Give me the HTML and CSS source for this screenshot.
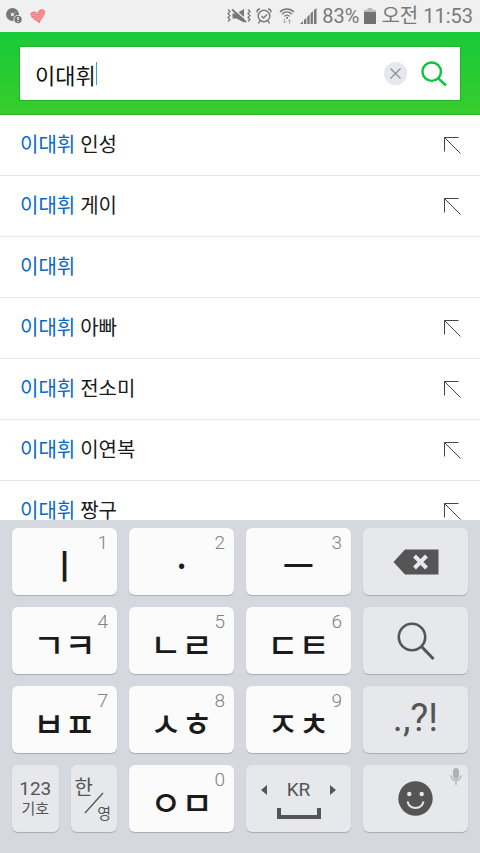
FILE: index.html
```html
<!DOCTYPE html>
<html lang="ko">
<head>
<meta charset="utf-8">
<meta name="viewport" content="width=device-width, initial-scale=1">
<title>이대휘</title>
<link rel="stylesheet" href="styles.css">
</head>
<body>
<div class="status">
  <div class="status-group">
    <svg class="icon" width="16" height="16" viewBox="0 0 16 16"><circle cx="6.500" cy="6.500" r="6.500" fill="#777"/><circle cx="6.500" cy="6.500" r="1.700" fill="#f0f0f0"/><path d="M6.500 6.500l4-3" stroke="#aaa" fill="none"/><circle cx="12" cy="11.500" r="4.600" fill="#f0f0f0"/><circle cx="12" cy="11.500" r="3.700" fill="#777"/><path d="M12 9v3M12 13v1" stroke="#f0f0f0" stroke-width="1.400"/></svg>
    <svg class="icon heart" width="16" height="15" viewBox="0 0 16 15"><path d="M9.500 14.500C6 11 0 9 .5 5 1 2 5 1.500 7.500 4 8.500 0 14-1 15 2.500c1 4-4 7-5.500 12z" fill="#ee777b"/><path d="M2 4.500l4 .5 8-3M1 6.500l6 .5 8-3M3 9l5 0 6-3M6 11.500l6-2" stroke="#f7b5b6" stroke-width=".8" fill="none"/></svg>
  </div>
  <div class="status-group status-end">
    <svg class="icon" width="24" height="16" viewBox="0 0 24 16"><path d="M5.500 5.500h4L17 1v13.500l-7.500-4h-4z" fill="#777"/><path d="M6 .5l14 12" stroke="#f0f0f0" stroke-width="1.600"/><path d="M5 1.500l14 12.500" stroke="#777" stroke-width="1.800"/><path d="M1 1.500l2 2-2 2 2 2-2 2 2 2-2 2M21 1.500l2 2-2 2 2 2-2 2 2 2-2 2" fill="none" stroke="#777" stroke-width="1.200"/></svg>
    <svg class="icon" width="16" height="16" viewBox="0 0 16 16" fill="none" stroke="#777" stroke-width="1.400"><circle cx="8" cy="8" r="5.800"/><path d="M5.500 8l2 2L11 6.500M1 4.500C1 2.500 2 1 4 1M15 4.500C15 2.500 14 1 12 1M4 12.500L2.500 15.500M12 12.500l1.500 3"/></svg>
    <svg class="icon wifi" width="16" height="16" viewBox="0 0 16 16" fill="none" stroke="#777" stroke-width="1.400"><path d="M1 4c4-4 10-4 14 0M3 6.200c3-3 7-3 10 0M5.200 8.400c1.500-1.700 4.100-1.700 5.600 0"/><circle cx="8" cy="9.800" r="1.100" fill="#777" stroke="none"/><path d="M5.500 11v4M4 13.500L5.500 15 7 13.500M10.500 16v-4M9 13.200l1.500-1.500L12 13.200" stroke="#aaa" stroke-width="1"/></svg>
    <svg class="icon" width="17" height="16" viewBox="0 0 17 16" fill="#777"><path d="M0 16l3-3v3zM4 12l2.300-2.300V16H4zM7.300 8.700L9.600 6.400V16H7.300zM10.600 5.400l2.300-2.300V16h-2.300zM14 2l2.500-2V16H14z"/></svg>
    <span>83%</span>
    <svg class="icon" width="12" height="16" viewBox="0 0 12 16"><path d="M3.500 0h5v2H12v3H0V2h3.500z" fill="#bbb"/><path d="M0 4h12v12H0z" fill="#717171"/></svg>
    <span>오전 11:53</span>
  </div>
</div>

<header class="header">
  <form class="search">
    <input class="search-input" type="text" value="이대휘" aria-label="검색어">
    <span class="caret"></span>
    <button class="plain clear" type="button" aria-label="지우기"><svg width="23" height="23" viewBox="0 0 23 23"><circle cx="11.500" cy="11.500" r="11.500" fill="#e5e8ec"/><path d="M6.500 6.500l10 10M16.500 6.500l-10 10" stroke="#8c8f93" stroke-width="1.300"/></svg></button>
    <button class="plain" type="submit" aria-label="검색"><svg width="26" height="26" viewBox="0 0 26 26" fill="none" stroke="#0cc53b" stroke-width="2.400"><circle cx="10.700" cy="10.700" r="9.200"/><path d="M17.300 17.300l7.700 7.200"/></svg></button>
  </form>
</header>

<main class="results">
  <ul class="list">
    <li class="row"><a class="term" href="#"><span class="match">이대휘</span> 인성</a><button class="plain" aria-label="이대휘 인성 입력"><svg class="arrow" width="17" height="17" viewBox="0 0 17 17"><path d="M14.500 .5H.5v14M.5 .5l16 16"/></svg></button></li>
    <li class="row"><a class="term" href="#"><span class="match">이대휘</span> 게이</a><button class="plain" aria-label="이대휘 게이 입력"><svg class="arrow" width="17" height="17" viewBox="0 0 17 17"><path d="M14.500 .5H.5v14M.5 .5l16 16"/></svg></button></li>
    <li class="row"><a class="term" href="#"><span class="match">이대휘</span></a></li>
    <li class="row"><a class="term" href="#"><span class="match">이대휘</span> 아빠</a><button class="plain" aria-label="이대휘 아빠 입력"><svg class="arrow" width="17" height="17" viewBox="0 0 17 17"><path d="M14.500 .5H.5v14M.5 .5l16 16"/></svg></button></li>
    <li class="row"><a class="term" href="#"><span class="match">이대휘</span> 전소미</a><button class="plain" aria-label="이대휘 전소미 입력"><svg class="arrow" width="17" height="17" viewBox="0 0 17 17"><path d="M14.500 .5H.5v14M.5 .5l16 16"/></svg></button></li>
    <li class="row"><a class="term" href="#"><span class="match">이대휘</span> 이연복</a><button class="plain" aria-label="이대휘 이연복 입력"><svg class="arrow" width="17" height="17" viewBox="0 0 17 17"><path d="M14.500 .5H.5v14M.5 .5l16 16"/></svg></button></li>
    <li class="row"><a class="term" href="#"><span class="match">이대휘</span> 짱구</a><button class="plain" aria-label="이대휘 짱구 입력"><svg class="arrow" width="17" height="17" viewBox="0 0 17 17"><path d="M14.500 .5H.5v14M.5 .5l16 16"/></svg></button></li>
  </ul>
</main>

<div class="keyboard">
  <button class="key"><span class="digit">1</span><span class="jamo">ㅣ</span></button>
  <button class="key"><span class="digit">2</span><span class="jamo">·</span></button>
  <button class="key"><span class="digit">3</span><span class="jamo">ㅡ</span></button>
  <button class="key fn" aria-label="삭제"><svg width="46" height="26" viewBox="0 0 46 26"><path d="M12 .5h33.500v25H12L.5 13z" fill="#555"/><path d="M21.500 7l12 12M33.500 7l-12 12" stroke="#e7e8eb" stroke-width="4"/></svg></button>

  <button class="key"><span class="digit">4</span><span class="jamo">ㄱㅋ</span></button>
  <button class="key"><span class="digit">5</span><span class="jamo">ㄴㄹ</span></button>
  <button class="key"><span class="digit">6</span><span class="jamo">ㄷㅌ</span></button>
  <button class="key fn" aria-label="검색"><svg width="38" height="38" viewBox="0 0 38 38" fill="none" stroke="#555" stroke-width="2.600"><circle cx="15" cy="15" r="13.200"/><path d="M24 24l12.500 13" stroke-width="3"/></svg></button>

  <button class="key"><span class="digit">7</span><span class="jamo">ㅂㅍ</span></button>
  <button class="key"><span class="digit">8</span><span class="jamo">ㅅㅎ</span></button>
  <button class="key"><span class="digit">9</span><span class="jamo">ㅈㅊ</span></button>
  <button class="key fn punct">.,?!</button>

  <div class="pair">
    <button class="key fn symbols"><span class="symbols-num">123</span><span class="symbols-ko">기호</span></button>
    <button class="key fn lang"><span class="lang-han">한</span><svg class="slash" width="20" height="22" viewBox="0 0 20 22"><path d="M1 21L19 1" stroke="#555" stroke-width="1.300"/></svg><span class="lang-eng">영</span></button>
  </div>
  <button class="key"><span class="digit">0</span><span class="jamo">ㅇㅁ</span></button>
  <button class="key fn space">
    <span class="space-top"><svg width="6" height="10" viewBox="0 0 6 10"><path d="M6 0v10L0 5z" fill="#555"/></svg><span>KR</span><svg width="6" height="10" viewBox="0 0 6 10"><path d="M0 0v10l6-5z" fill="#555"/></svg></span>
    <svg width="44" height="11" viewBox="0 0 44 11"><path d="M2 0v9h40V0" fill="none" stroke="#555" stroke-width="4"/></svg>
  </button>
  <button class="key fn" aria-label="이모티콘"><svg class="mic" width="12" height="17" viewBox="0 0 12 17"><rect x="3" width="6" height="11" rx="3" fill="#b0b1b4"/><path d="M1 7.500c0 6.500 10 6.500 10 0M6 12.500V17" fill="none" stroke="#b0b1b4" stroke-width="1.300"/></svg><svg width="35" height="35" viewBox="0 0 35 35"><circle cx="17.500" cy="17.500" r="17.200" fill="#555"/><circle cx="11.300" cy="13" r="2.200" fill="#e7e8eb"/><circle cx="23.700" cy="13" r="2.200" fill="#e7e8eb"/><path d="M9.500 20.500c2 8.500 14 8.500 16 0" fill="none" stroke="#e7e8eb" stroke-width="2"/></svg></button>
</div>
</body>
</html>
```
FILE: styles.css
```css
* {
  box-sizing: border-box;
}

body {
  margin: 0;
  height: 100vh;
  display: flex;
  flex-direction: column;
  overflow: hidden;
  background: #fff;
  color: #1a1a1a;
  font-family: Roboto, "Noto Sans CJK KR", sans-serif;
}

svg {
  display: block;
  flex: none;
}

button,
input {
  margin: 0;
  border: 0;
  padding: 0;
  font-family: inherit;
  color: inherit;
}

.plain {
  background: none;
}

.status {
  display: flex;
  flex: none;
  justify-content: space-between;
  align-items: center;
  height: 32px;
  padding: 0 7px 0 6px;
  background: #f0f0f0;
  color: #7a7a7a;
  font-size: 20px;
  line-height: 32px;
  white-space: nowrap;
}

.status-group {
  display: flex;
  align-items: center;
  gap: 8px;
}

.status-end {
  gap: 5px;
}

.wifi {
  margin-left: 2px;
}

.header {
  flex: none;
  padding: 15px 20px 14px;
  background: linear-gradient(#17ca38, #38cd2c);
  border-bottom: 1px solid #2fb427;
}

.search {
  display: flex;
  align-items: center;
  height: 53px;
  padding: 0 13px 0 15px;
  background: #fff;
  box-shadow: 0 0 0 1px #22b52c;
}

.search-input {
  field-sizing: content;
  min-width: 0;
  height: 30px;
  background: none;
  color: #111;
  font-size: 22px;
  outline: 0;
}

.caret {
  width: 1px;
  height: 23px;
  background: #3f9de8;
}

.clear {
  margin: 0 14px 0 auto;
}

.results {
  flex: 1 1 0;
  min-height: 0;
  overflow: hidden;
}

.list {
  margin: 0;
  padding: 0;
  list-style: none;
}

.row {
  display: flex;
  align-items: center;
  justify-content: space-between;
  height: 61px;
  padding: 0 19px 0 20px;
  border-bottom: 1px solid #e6e9eb;
}

.term {
  color: #1a1a1a;
  font-size: 20px;
  line-height: 30px;
  text-decoration: none;
}

.match {
  color: #0668c9;
}

.arrow {
  fill: none;
  stroke: #444;
  stroke-width: 1px;
}

.keyboard {
  display: grid;
  flex: none;
  grid-template-columns: repeat(4, 1fr);
  grid-auto-rows: 67px;
  gap: 12px;
  padding: 8px 12px 21px;
  background: #d5d8df;
}

.key {
  position: relative;
  display: flex;
  align-items: center;
  justify-content: center;
  min-width: 0;
  border-radius: 6px;
  background: #fbfbfb;
  box-shadow: 0 1px 1px #a9acb1;
}

.fn {
  background: #e7e8eb;
  color: #555;
}

.digit {
  position: absolute;
  top: 4px;
  right: 9px;
  color: #808080;
  font-size: 19px;
  font-weight: 300;
  line-height: 22px;
}

.jamo {
  padding-top: 6px;
  font-family: "Noto Sans CJK KR", sans-serif;
  font-size: 34px;
  font-weight: 500;
  line-height: 40px;
}

.punct {
  padding-bottom: 4px;
  font-size: 38px;
  font-weight: 400;
}

.pair {
  display: grid;
  grid-template-columns: 1fr 1fr;
  gap: 12px;
}

.symbols,
.space {
  flex-direction: column;
}

.symbols-num {
  font-size: 19px;
  line-height: 20px;
}

.symbols-ko {
  font-size: 15px;
  line-height: 20px;
}

.lang-han {
  position: absolute;
  top: 11px;
  left: 4px;
  font-size: 20px;
  line-height: 24px;
}

.slash {
  margin-top: 8px;
}

.lang-eng {
  position: absolute;
  right: 6px;
  bottom: 8px;
  font-size: 15px;
  line-height: 20px;
}

.space {
  gap: 6px;
}

.space-top {
  display: flex;
  align-items: center;
  gap: 20px;
  font-size: 19px;
  line-height: 24px;
}

.mic {
  position: absolute;
  top: 3px;
  right: 6px;
}
```
